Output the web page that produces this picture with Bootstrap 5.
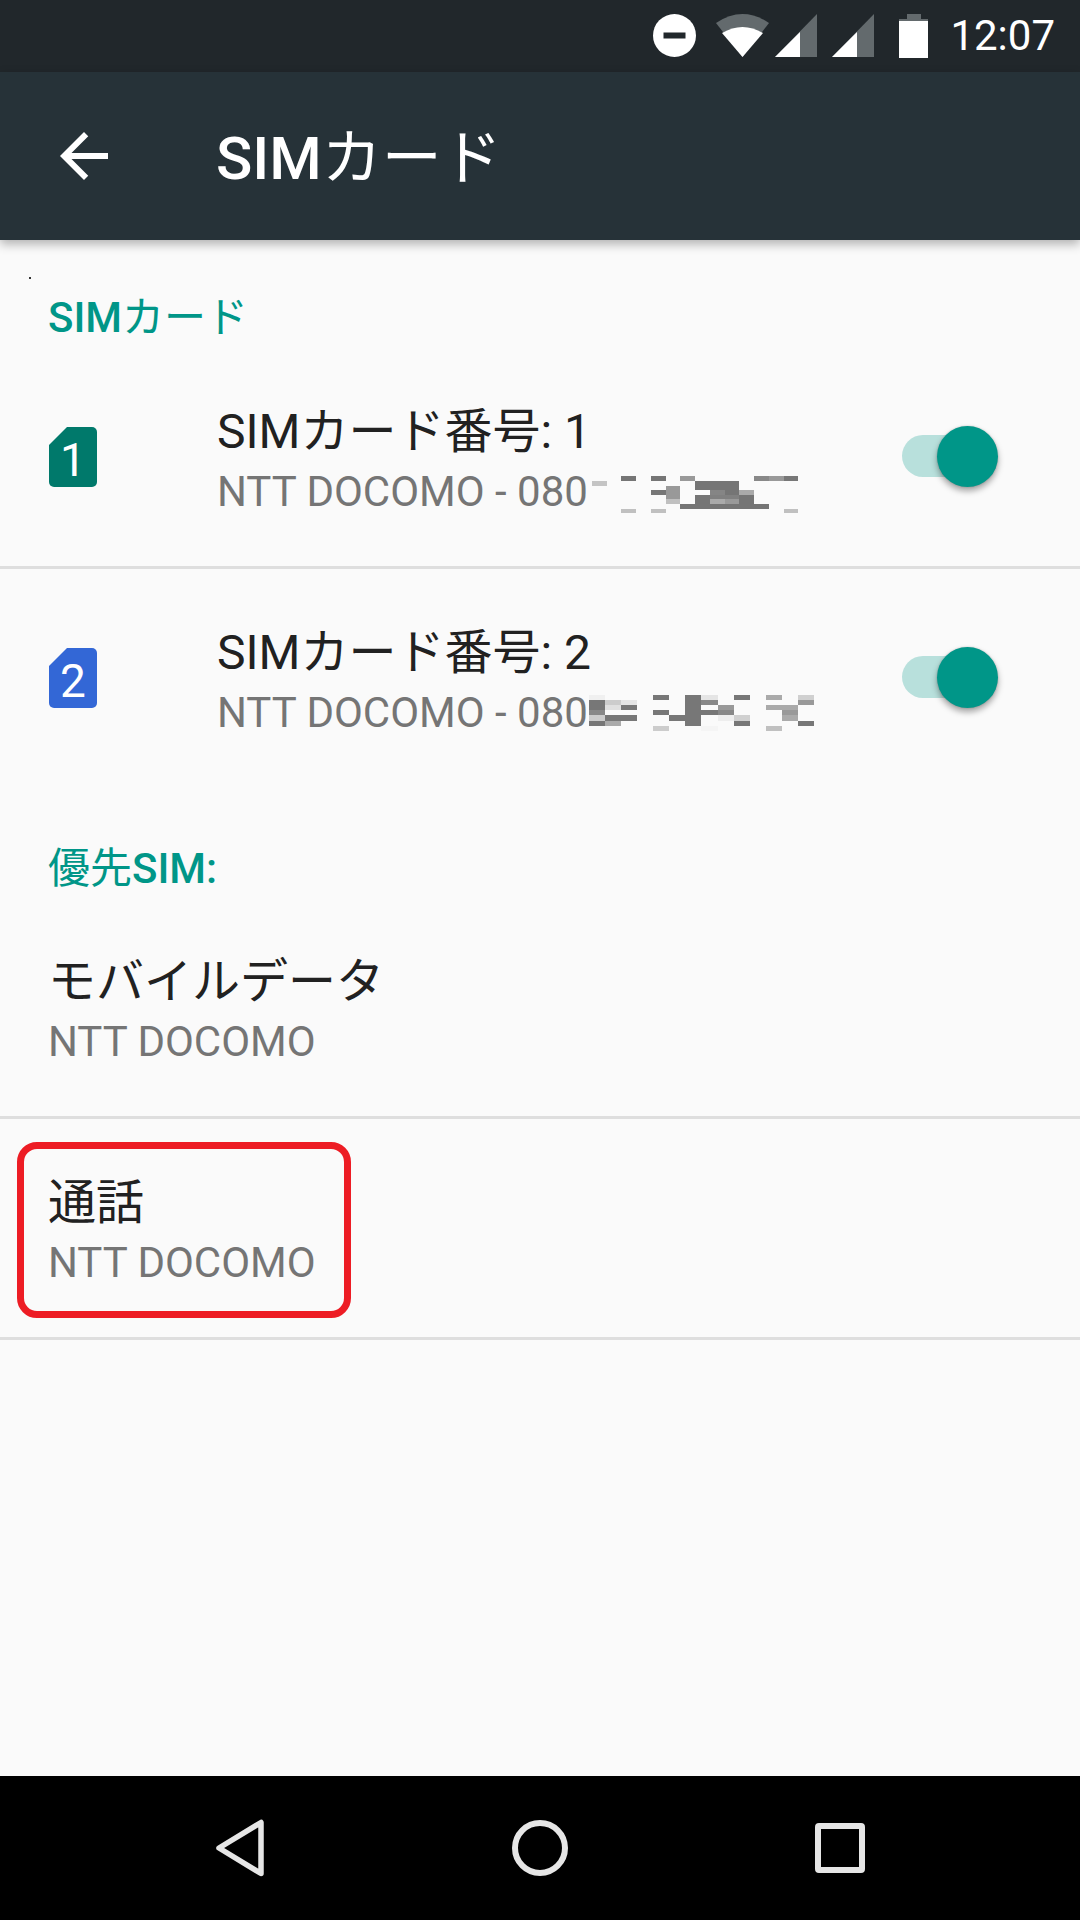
<!DOCTYPE html>
<html lang="ja">
  <head>
    <meta charset="utf-8" />
    <meta name="viewport" content="width=device-width, initial-scale=1" />
    <title>SIMカード</title>
    <link href="https://cdn.jsdelivr.net/npm/bootstrap@5.3.3/dist/css/bootstrap.min.css" rel="stylesheet" />
    <style>
      html, body { height: 100%; }
      body {
        background-color: #fafafa;
        font-family: Roboto, "Noto Sans CJK JP", sans-serif;
        width: 1080px;
        height: 1920px;
        overflow: hidden;
      }
      .screen { height: 1920px; }
      .statusBar {
        height: 72px;
        background-color: #21272b;
        color: #fff;
        padding-right: 25px;
        font-size: 42px;
        line-height: 72px;
      }
      .statusBar svg { display: block; margin-top: 14px; }
      .gapDnd { margin-right: 20px; }
      .gapWifi { margin-right: 6px; }
      .gapSigOne { margin-right: 15px; }
      .gapSigTwo { margin-right: 25px; }
      .gapBattery { margin-right: 22px; }
      .appBar {
        height: 168px;
        background-color: #263238;
        color: #fff;
        padding-left: 48px;
        box-shadow: 0 4px 10px rgba(0, 0, 0, 0.3);
      }
      .appTitle {
        margin-left: 96px;
        font-size: 60px;
        font-weight: 500;
        line-height: 72px;
        padding-top: 5px;
      }
      .kana { font-weight: 400; }
      .content { position: relative; }
      .specDot {
        position: absolute;
        left: 29px;
        top: 37px;
        width: 2px;
        height: 2px;
        background-color: #333;
      }
      .sectionHead {
        color: #009688;
        font-size: 42px;
        font-weight: 500;
        padding-left: 48px;
        line-height: 50px;
      }
      .headOne { height: 108px; padding-top: 53px; }
      .headTwo { height: 111px; padding-top: 57px; }
      .simRow {
        position: relative;
        height: 218px;
        padding-left: 48px;
        padding-top: 56px;
      }
      .simRow.ruled { height: 221px; border-bottom: 3px solid #dedede; }
      .iconCol { width: 169px; flex: none; padding-top: 23px; padding-left: 1px; }
      .simIcon {
        position: relative;
        width: 48px;
        height: 60px;
      }
      .simIcon svg { display: block; }
      .simNum {
        position: absolute;
        inset: 0;
        padding-top: 3px;
        color: #fff;
        text-align: center;
        font-size: 46px;
        line-height: 60px;
      }
      .rowTitle {
        color: #212121;
        font-size: 48px;
        line-height: 56px;
      }
      .rowSub {
        color: #757575;
        font-size: 42px;
        line-height: 64px;
        white-space: nowrap;
      }
      .mosaic {
        position: absolute;
        left: 588px;
      }
      .mosaicOne { top: 128px; }
      .mosaicTwo { top: 126px; }
      .simSwitch {
        position: absolute;
        left: 902px;
        top: 87px;
        width: 84px;
        height: 42px;
        border-radius: 21px;
        background-color: #b8e0dc;
      }
      .simKnob {
        position: absolute;
        left: 35px;
        top: -9px;
        width: 61px;
        height: 61px;
        border-radius: 50%;
        background-color: #009688;
        box-shadow: 0 4px 6px rgba(0, 0, 0, 0.35), 0 0 2px rgba(0, 0, 0, 0.2);
      }
      .callBox {
        position: absolute;
        left: 17px;
        top: 23px;
        width: 334px;
        height: 176px;
        border: 7px solid #ed1c24;
        border-radius: 20px;
      }
      .navBar {
        height: 144px;
        background-color: #000;
      }
      .navSlot { width: 300px; }
    </style>
  </head>
  <body>
    <div class="screen d-flex flex-column">
      <div class="statusBar d-flex justify-content-end align-items-start">
        <svg class="gapDnd" width="43" height="43" viewBox="0 0 43 43">
          <circle cx="21.5" cy="21.5" r="21.5" fill="#fff" />
          <rect x="10.5" y="18.5" width="22" height="6" fill="#21272b" />
        </svg>
        <svg class="gapWifi" width="53" height="43" viewBox="0 0 53 43">
          <path d="M0 9Q26.500-9 53 9L26.500 43Z" fill="#636a6d" />
          <path d="M6 19Q26.500 7 47 19L26.500 43Z" fill="#fff" />
        </svg>
        <svg class="gapSigOne" width="42" height="43" viewBox="0 0 42 43">
          <path d="M0 43L42 0V43Z" fill="#636a6d" />
          <path d="M0 43L25 18V43Z" fill="#fff" />
        </svg>
        <svg class="gapSigTwo" width="42" height="43" viewBox="0 0 42 43">
          <path d="M0 43L42 0V43Z" fill="#636a6d" />
          <path d="M0 43L25 18V43Z" fill="#fff" />
        </svg>
        <svg class="gapBattery" width="29" height="44" viewBox="0 0 29 44">
          <rect x="8" y="0" width="14" height="5" fill="#636a6d" />
          <rect x="0" y="5" width="29" height="2" fill="#636a6d" />
          <rect x="0" y="7" width="29" height="37" fill="#fff" />
        </svg>
        <span>12:07</span>
      </div>

      <div class="appBar d-flex align-items-center position-relative">
        <svg width="72" height="72" viewBox="0 0 24 24" fill="#fff">
          <path d="M20 11H7.830l5.590-5.590L12 4l-8 8 8 8 1.410-1.410L7.830 13H20v-2z" />
        </svg>
        <div class="appTitle">SIM<span class="kana">カード</span></div>
      </div>

      <div class="content flex-grow-1">
        <div class="specDot"></div>
        <div class="sectionHead headOne">SIM<span class="kana">カード</span></div>

        <div class="simRow ruled d-flex">
          <div class="iconCol">
            <div class="simIcon">
              <svg width="48" height="60" viewBox="0 0 48 60">
                <path d="M18 0H43a5 5 0 0 1 5 5V55a5 5 0 0 1-5 5H5a5 5 0 0 1-5-5V18Z" fill="#00796b" />
              </svg>
              <div class="simNum">1</div>
            </div>
          </div>
          <div>
            <div class="rowTitle">SIMカード番号: 1</div>
            <div class="rowSub">NTT DOCOMO - 080</div>
          </div>
          <svg class="mosaic mosaicOne" width="212" height="40" viewBox="588 476 212 40">
            <rect x="621" y="476" width="15" height="5" fill="#757575" />
            <rect x="651" y="476" width="15" height="5" fill="#757575" />
            <rect x="680" y="476" width="15" height="5" fill="#999" />
            <rect x="754" y="476" width="15" height="5" fill="#888" />
            <rect x="769" y="476" width="15" height="5" fill="#999" />
            <rect x="784" y="476" width="14" height="5" fill="#777" />
            <rect x="592" y="481" width="15" height="5" fill="#c4c4c4" />
            <rect x="695" y="481" width="44" height="9" fill="#757575" />
            <rect x="666" y="486" width="14" height="4" fill="#999" />
            <rect x="651" y="490" width="15" height="5" fill="#777" />
            <rect x="666" y="490" width="14" height="9" fill="#999" />
            <rect x="710" y="490" width="15" height="5" fill="#858585" />
            <rect x="725" y="490" width="14" height="5" fill="#757575" />
            <rect x="739" y="490" width="15" height="5" fill="#aaa" />
            <rect x="695" y="495" width="15" height="9" fill="#757575" />
            <rect x="710" y="495" width="29" height="4" fill="#808080" />
            <rect x="739" y="495" width="15" height="9" fill="#757575" />
            <rect x="666" y="499" width="14" height="5" fill="#c0c0c0" />
            <rect x="710" y="499" width="15" height="5" fill="#aaa" />
            <rect x="725" y="499" width="14" height="5" fill="#999" />
            <rect x="680" y="504" width="89" height="5" fill="#757575" />
            <rect x="621" y="509" width="15" height="4" fill="#c0c0c0" />
            <rect x="651" y="509" width="15" height="4" fill="#c0c0c0" />
            <rect x="784" y="509" width="14" height="4" fill="#c0c0c0" />
          </svg>
          <div class="simSwitch"><div class="simKnob"></div></div>
        </div>

        <div class="simRow d-flex">
          <div class="iconCol">
            <div class="simIcon">
              <svg width="48" height="60" viewBox="0 0 48 60">
                <path d="M18 0H43a5 5 0 0 1 5 5V55a5 5 0 0 1-5 5H5a5 5 0 0 1-5-5V18Z" fill="#3367d6" />
              </svg>
              <div class="simNum">2</div>
            </div>
          </div>
          <div>
            <div class="rowTitle">SIMカード番号: 2</div>
            <div class="rowSub">NTT DOCOMO - 080</div>
          </div>
          <svg class="mosaic mosaicTwo" width="226" height="37" viewBox="588 695 226 37">
            <rect x="589" y="695" width="16" height="5" fill="#f0f0f0" />
            <rect x="653" y="695" width="16" height="5" fill="#777" />
            <rect x="685" y="695" width="16" height="5" fill="#777" />
            <rect x="701" y="695" width="17" height="5" fill="#e5e5e5" />
            <rect x="734" y="695" width="16" height="5" fill="#777" />
            <rect x="766" y="695" width="16" height="5" fill="#aaa" />
            <rect x="798" y="695" width="16" height="5" fill="#d0d0d0" />
            <rect x="589" y="700" width="16" height="10" fill="#777" />
            <rect x="605" y="700" width="16" height="5" fill="#ccc" />
            <rect x="621" y="700" width="16" height="5" fill="#e5e5e5" />
            <rect x="685" y="700" width="16" height="26" fill="#777" />
            <rect x="701" y="700" width="17" height="5" fill="#888" />
            <rect x="798" y="700" width="16" height="5" fill="#999" />
            <rect x="605" y="705" width="16" height="5" fill="#e0e0e0" />
            <rect x="621" y="705" width="16" height="5" fill="#777" />
            <rect x="718" y="705" width="16" height="5" fill="#999" />
            <rect x="766" y="705" width="32" height="5" fill="#aaa" />
            <rect x="589" y="710" width="16" height="5" fill="#888" />
            <rect x="653" y="710" width="16" height="5" fill="#777" />
            <rect x="701" y="710" width="17" height="5" fill="#777" />
            <rect x="718" y="710" width="16" height="5" fill="#888" />
            <rect x="782" y="710" width="16" height="5" fill="#999" />
            <rect x="589" y="715" width="16" height="6" fill="#ccc" />
            <rect x="605" y="715" width="32" height="6" fill="#777" />
            <rect x="669" y="715" width="16" height="6" fill="#777" />
            <rect x="718" y="715" width="16" height="6" fill="#eee" />
            <rect x="734" y="715" width="16" height="6" fill="#d0d0d0" />
            <rect x="782" y="715" width="16" height="6" fill="#aaa" />
            <rect x="589" y="721" width="16" height="5" fill="#777" />
            <rect x="605" y="721" width="16" height="5" fill="#aaa" />
            <rect x="734" y="721" width="16" height="5" fill="#777" />
            <rect x="798" y="721" width="16" height="5" fill="#777" />
            <rect x="653" y="726" width="16" height="5" fill="#ccc" />
            <rect x="701" y="726" width="17" height="5" fill="#f5f5f5" />
            <rect x="766" y="726" width="16" height="5" fill="#c0c0c0" />
          </svg>
          <div class="simSwitch"><div class="simKnob"></div></div>
        </div>

        <div class="sectionHead headTwo"><span class="kana">優先</span>SIM:</div>

        <div class="simRow ruled">
          <div class="rowTitle">モバイルデータ</div>
          <div class="rowSub">NTT DOCOMO</div>
        </div>

        <div class="simRow ruled">
          <div class="rowTitle">通話</div>
          <div class="rowSub">NTT DOCOMO</div>
          <div class="callBox"></div>
        </div>
      </div>

      <div class="navBar d-flex justify-content-center align-items-center">
        <div class="navSlot d-flex justify-content-center">
          <svg width="48" height="58" viewBox="0 0 48 58">
            <path d="M45 3.500V54.500L3 29Z" fill="none" stroke="#e6e6e6" stroke-width="5.500" stroke-linejoin="round" />
          </svg>
        </div>
        <div class="navSlot d-flex justify-content-center">
          <svg width="56" height="56" viewBox="0 0 56 56">
            <circle cx="28" cy="28" r="25" fill="none" stroke="#e6e6e6" stroke-width="6" />
          </svg>
        </div>
        <div class="navSlot d-flex justify-content-center">
          <svg width="50" height="50" viewBox="0 0 50 50">
            <rect x="3" y="3" width="44" height="44" rx="1" fill="none" stroke="#e6e6e6" stroke-width="6" />
          </svg>
        </div>
      </div>
    </div>
    <script src="https://cdn.jsdelivr.net/npm/bootstrap@5.3.3/dist/js/bootstrap.bundle.min.js"></script>
  </body>
</html>
